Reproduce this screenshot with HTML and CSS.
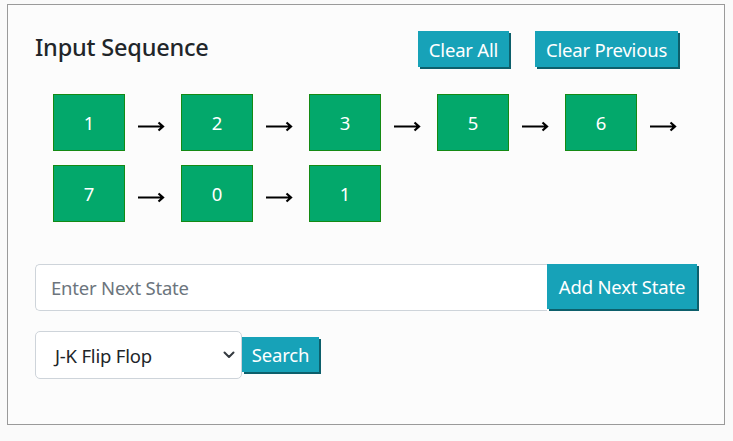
FILE: index.html
```html
<!DOCTYPE html>
<html>
<head>
<meta charset="utf-8">
<link rel="stylesheet" href="styles.css">
</head>
<body>
<div class="card">
  <div class="header">
    <h2 class="title">Input Sequence</h2>
    <div class="actions">
      <button class="btn btn-clear">Clear All</button>
      <button class="btn btn-prev">Clear Previous</button>
    </div>
  </div>
  <div class="sequence">
    <div class="item"><div class="state">1</div><span class="arrow"><svg width="27" height="12" viewBox="0 0 27 12"><path d="M0 6.5 H25 M20.5 2.5 L25 6.5 L20.5 10.5" fill="none" stroke="#000" stroke-width="2.2"/></svg></span></div>
    <div class="item"><div class="state">2</div><span class="arrow"><svg width="27" height="12" viewBox="0 0 27 12"><path d="M0 6.5 H25 M20.5 2.5 L25 6.5 L20.5 10.5" fill="none" stroke="#000" stroke-width="2.2"/></svg></span></div>
    <div class="item"><div class="state">3</div><span class="arrow"><svg width="27" height="12" viewBox="0 0 27 12"><path d="M0 6.5 H25 M20.5 2.5 L25 6.5 L20.5 10.5" fill="none" stroke="#000" stroke-width="2.2"/></svg></span></div>
    <div class="item"><div class="state">5</div><span class="arrow"><svg width="27" height="12" viewBox="0 0 27 12"><path d="M0 6.5 H25 M20.5 2.5 L25 6.5 L20.5 10.5" fill="none" stroke="#000" stroke-width="2.2"/></svg></span></div>
    <div class="item"><div class="state">6</div><span class="arrow"><svg width="27" height="12" viewBox="0 0 27 12"><path d="M0 6.5 H25 M20.5 2.5 L25 6.5 L20.5 10.5" fill="none" stroke="#000" stroke-width="2.2"/></svg></span></div>
    <div class="item"><div class="state">7</div><span class="arrow"><svg width="27" height="12" viewBox="0 0 27 12"><path d="M0 6.5 H25 M20.5 2.5 L25 6.5 L20.5 10.5" fill="none" stroke="#000" stroke-width="2.2"/></svg></span></div>
    <div class="item"><div class="state">0</div><span class="arrow"><svg width="27" height="12" viewBox="0 0 27 12"><path d="M0 6.5 H25 M20.5 2.5 L25 6.5 L20.5 10.5" fill="none" stroke="#000" stroke-width="2.2"/></svg></span></div>
    <div class="item"><div class="state">1</div></div>
  </div>
  <div class="input-group">
    <input class="next-input" type="text" placeholder="Enter Next State">
    <button class="btn btn-add">Add Next State</button>
  </div>
  <div class="search-row">
    <div class="select-wrap">
      <span class="select-text">J-K Flip Flop</span>
      <svg class="chev" width="12" height="8" viewBox="0 0 12 8"><path d="M1.5 1.5 L6 6 L10.5 1.5" fill="none" stroke="#343a40" stroke-width="2" stroke-linecap="round" stroke-linejoin="round"/></svg>
    </div>
    <button class="btn btn-search">Search</button>
  </div>
</div>
</body>
</html>
```

FILE: styles.css
```css
html, body {
  margin: 0;
  padding: 0;
  background: #fafafa;
}
body {
  font-family: "Noto Sans", "Open Sans", sans-serif;
  color: #212529;
}
.card {
  margin: 4px 0 0 7px;
  width: 716px;
  height: 419px;
  border: 1px solid #9a9a9a;
  background: #fcfcfc;
  box-sizing: content-box;
}
.header {
  display: flex;
  align-items: flex-start;
  padding: 26px 0 0 27px;
}
.title {
  margin: 0;
  font-size: 23.5px;
  font-weight: 500;
  line-height: 32px;
  letter-spacing: -0.2px;
  flex: 1;
}
.actions {
  display: flex;
  gap: 24px;
  margin-right: 44px;
}
.btn {
  font-family: "Noto Sans", "Open Sans", sans-serif;
  background: #17a2b8;
  color: #fff;
  border: none;
  border-radius: 0;
  box-shadow: 2px 2px 0 #0d5f6b;
  font-size: 18.5px;
  height: 36px;
  padding: 0;
  margin: 0 2px 2px 0;
  white-space: nowrap;
  letter-spacing: -0.2px;
  cursor: pointer;
}
.btn-clear {
  width: 91px;
}
.btn-prev {
  width: 143px;
}
.sequence {
  display: flex;
  flex-wrap: wrap;
  row-gap: 14px;
  width: 660px;
  margin: 25px 0 0 45px;
}
.item {
  display: flex;
  align-items: center;
}
.state {
  width: 70px;
  height: 55px;
  border: 1px solid #148a14;
  background: #03a86b;
  color: #fff;
  font-size: 18.5px;
  display: flex;
  align-items: center;
  justify-content: center;
}
.arrow {
  width: 56px;
  display: flex;
  justify-content: center;
  padding-top: 6px;
  padding-right: 4px;
  box-sizing: border-box;
}
.arrow svg {
  display: block;
}
.input-group {
  display: flex;
  margin: 42px 0 0 27px;
  width: 664px;
}
.next-input {
  flex: 1;
  height: 47px;
  box-sizing: border-box;
  border: 1px solid #ced4da;
  border-right: none;
  border-radius: 5px 0 0 5px;
  padding: 0 15px;
  font-family: "Noto Sans", "Open Sans", sans-serif;
  font-size: 18.5px;
  background: #fff;
  color: #495057;
  outline: none;
}
.next-input::placeholder {
  color: #6c757d;
  letter-spacing: -0.2px;
}
.btn-add {
  height: 45px;
  width: 150px;
}
.search-row {
  display: flex;
  align-items: center;
  margin: 20px 0 0 27px;
}
.select-wrap {
  width: 207px;
  height: 48px;
  box-sizing: border-box;
  border: 1px solid #ced4da;
  border-radius: 5px;
  background: #fff;
  display: flex;
  align-items: center;
  justify-content: space-between;
  padding: 0 6px 0 19px;
}
.select-text {
  font-size: 18.5px;
  letter-spacing: -0.2px;
  color: #212529;
}
.chev {
  display: block;
}
.btn-search {
  height: 35px;
  width: 77px;
}
```
